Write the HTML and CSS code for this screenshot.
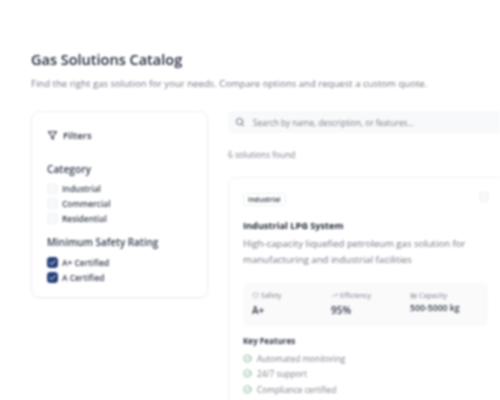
FILE: index.html
```html
<!DOCTYPE html>
<html lang="en">
<head>
<meta charset="utf-8">
<title>Gas Solutions Catalog</title>
<link rel="stylesheet" href="styles.css">
</head>
<body>
<main class="page">
  <h1 class="title">Gas Solutions Catalog</h1>
  <p class="subtitle">Find the right gas solution for your needs. Compare options and request a custom quote.</p>
  <div class="layout">
    <aside class="filters">
      <div class="filters-head">
        <svg class="icon-filter" viewBox="0 0 24 24"><path d="M3 4h18l-7 8.5V20l-4-2v-5.5z"/></svg>
        <span>Filters</span>
      </div>
      <h2 class="group-title">Category</h2>
      <ul class="options options-first">
        <li class="option"><span class="box"></span>Industrial</li>
        <li class="option"><span class="box"></span>Commercial</li>
        <li class="option"><span class="box"></span>Residential</li>
      </ul>
      <h2 class="group-title group-second">Minimum Safety Rating</h2>
      <ul class="options options-second">
        <li class="option"><span class="box checked"><svg viewBox="0 0 24 24"><path d="M5 12.5l4.5 4.5L19 7.5"/></svg></span>A+ Certified</li>
        <li class="option"><span class="box checked"><svg viewBox="0 0 24 24"><path d="M5 12.5l4.5 4.5L19 7.5"/></svg></span>A Certified</li>
      </ul>
    </aside>
    <section class="results">
      <div class="search">
        <svg class="icon-search" viewBox="0 0 24 24"><circle cx="11" cy="11" r="7.5"/><path d="M21 21l-4.5-4.5"/></svg>
        <span>Search by name, description, or features...</span>
      </div>
      <p class="count">6 solutions found</p>
      <article class="card">
        <div class="card-top">
          <span class="badge">Industrial</span>
          <span class="box card-box"></span>
        </div>
        <h3 class="card-title">Industrial LPG System</h3>
        <p class="card-desc">High-capacity liquefied petroleum gas solution for manufacturing and industrial facilities</p>
        <div class="stats">
          <div class="stat">
            <div class="stat-label"><svg viewBox="0 0 24 24"><path d="M12 3l8 3v6c0 5-3.5 7.5-8 9-4.5-1.500-8-4-8-9V6z"/></svg>Safety</div>
            <div class="stat-value stat-large">A+</div>
          </div>
          <div class="stat">
            <div class="stat-label"><svg viewBox="0 0 24 24"><path d="M2 17l7-7 5 5 8-8M16 7h6v6"/></svg>Efficiency</div>
            <div class="stat-value stat-large">95%</div>
          </div>
          <div class="stat">
            <div class="stat-label"><svg viewBox="0 0 24 24"><path d="M3 20V5h6l2 3h10v12zM3 12h18M9 12v8M15 12v8"/></svg>Capacity</div>
            <div class="stat-value stat-wide">500-5000 kg</div>
          </div>
        </div>
        <h4 class="features-title">Key Features</h4>
        <ul class="features">
          <li class="feature"><svg viewBox="0 0 24 24"><circle cx="12" cy="12" r="9.500"/><path d="M8 12l3 3 5-5.500"/></svg>Automated monitoring</li>
          <li class="feature"><svg viewBox="0 0 24 24"><circle cx="12" cy="12" r="9.500"/><path d="M8 12l3 3 5-5.500"/></svg>24/7 support</li>
          <li class="feature"><svg viewBox="0 0 24 24"><circle cx="12" cy="12" r="9.500"/><path d="M8 12l3 3 5-5.500"/></svg>Compliance certified</li>
        </ul>
      </article>
    </section>
  </div>
</main>
</body>
</html>
```

FILE: styles.css
```css
* { box-sizing: border-box; }
html, body { margin: 0; width: 500px; height: 400px; overflow: hidden; background: #fff; }
body { font-family: "Open Sans", "Noto Sans", sans-serif; color: #1f2937; }
ul { list-style: none; margin: 0; padding: 0; }
h1, h2, h3, h4, p { margin: 0; }

.page { width: 500px; height: 400px; overflow: hidden; padding: 49px 0 0 31px; filter: blur(0.85px); }
.title { font-size: 14.5px; line-height: 22px; font-weight: 600; color: #232a3c; }
.subtitle { margin-top: 6px; font-size: 9.57px; line-height: 14px; color: #6f7682; white-space: nowrap; }
.layout { display: flex; gap: 20px; margin-top: 20px; align-items: flex-start; }

.filters { flex: 0 0 177px; height: 187px; padding: 15px 15px 0 15px; border: 1px solid #eceef1; border-radius: 8px; box-shadow: 0 1px 2px rgba(30,40,70,0.03); }
.filters-head { display: flex; align-items: center; gap: 5px; height: 16px; font-size: 9.6px; font-weight: 600; color: #2b3244; }
.icon-filter { width: 11px; height: 11px; fill: none; stroke: #2b3244; stroke-width: 2.2; stroke-linejoin: round; }
.group-title { margin-top: 19px; font-size: 10.2px; line-height: 14px; font-weight: 600; color: #333a4c; }
.group-second { margin-top: 11px; font-size: 9.9px; }
.options { display: flex; flex-direction: column; gap: 3px; }
.options-first { margin-top: 6px; }
.options-second { margin-top: 7px; }
.option { display: flex; align-items: center; gap: 4px; height: 12px; font-size: 8.4px; font-weight: 600; color: #363d4d; }
.box { flex: none; width: 11px; height: 11px; border-radius: 3px; background: #f8f9fa; border: 1px solid #eef0f2; display: flex; align-items: center; justify-content: center; }
.box.checked { background: #27417c; border-color: #27417c; }
.box svg { width: 9px; height: 9px; fill: none; stroke: #fff; stroke-width: 2.6; stroke-linecap: round; stroke-linejoin: round; }

.results { flex: 0 0 330px; }
.search { display: flex; align-items: center; gap: 8px; height: 22px; padding-left: 7px; background: #f8f9fa; border-radius: 5px; font-size: 8.2px; color: #787e8a; }
.icon-search { width: 10px; height: 10px; fill: none; stroke: #5c6575; stroke-width: 2.3; stroke-linecap: round; }
.count { margin-top: 16px; font-size: 8.3px; line-height: 12px; color: #787e8a; }
.card { margin-top: 16px; height: 260px; padding: 14px; border: 1px solid #eff0f3; border-radius: 8px; box-shadow: 0 1px 2px rgba(30,40,70,0.02); }
.card-top { display: flex; align-items: flex-start; justify-content: space-between; width: 246px; height: 13px; }
.badge { display: inline-flex; align-items: center; height: 13px; margin-top: 1px; padding: 0 4px; border: 1px solid #eef0f2; border-radius: 3px; font-size: 7px; font-weight: 600; color: #2b3242; }
.card-box { width: 10px; height: 10px; }
.card-title { margin-top: 14px; font-size: 9.2px; line-height: 14px; font-weight: 700; color: #222837; }
.card-desc { margin-top: 2.5px; width: 245px; font-size: 9.6px; line-height: 16px; color: #6f7580; }
.stats { display: flex; margin-top: 15.5px; width: 245px; height: 43px; padding: 6px 0 0 9px; background: #fafafb; border-radius: 5px; }
.stat { flex: 0 0 79px; }
.stat-label { display: flex; align-items: center; gap: 2px; height: 12px; font-size: 7.1px; color: #797f89; }
.stat-label svg { width: 7px; height: 7px; fill: none; stroke: #797f89; stroke-width: 1.8; stroke-linejoin: round; }
.stat-value { margin-top: 3px; font-size: 8.2px; line-height: 12px; font-weight: 600; color: #313847; }
.stat-large { font-size: 10px; }
.stat-wide { font-size: 8.7px; margin-top: 1px; }
.features-title { margin-top: 9px; font-size: 8.1px; line-height: 12px; font-weight: 700; color: #2f3646; }
.features { margin-top: 5px; display: flex; flex-direction: column; gap: 3.5px; }
.feature { display: flex; align-items: center; gap: 5px; height: 12px; font-size: 8.3px; color: #797f89; }
.feature svg { flex: none; width: 9px; height: 9px; fill: none; stroke: #63a87c; stroke-width: 2; stroke-linecap: round; stroke-linejoin: round; }
```
